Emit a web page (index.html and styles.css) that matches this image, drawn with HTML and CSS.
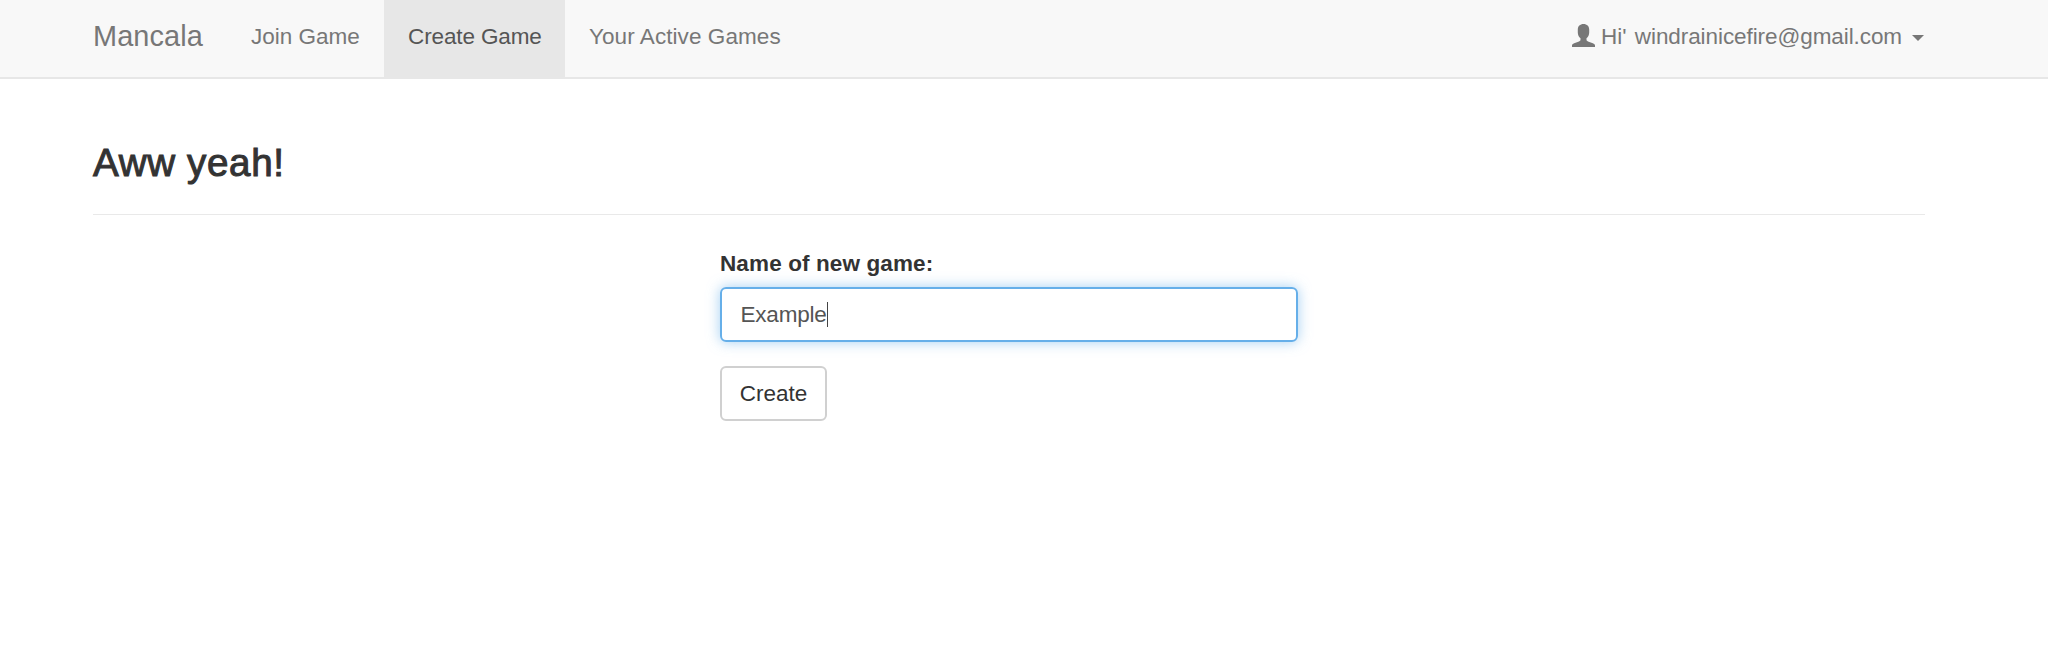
FILE: index.html
```html
<!DOCTYPE html>
<html lang="en">
<head>
<meta charset="utf-8">
<title>Mancala</title>
<link rel="stylesheet" href="styles.css">
</head>
<body>
<nav class="navbar">
  <a class="brand">Mancala</a>
  <a class="nav-link nav-join">Join Game</a>
  <a class="nav-link nav-create active">Create Game</a>
  <a class="nav-link nav-games">Your Active Games</a>
  <a class="user-menu">
    <svg class="user-icon" viewBox="0 0 23 23"><path d="M11.5 0C15 0 17.2 2.2 17.2 5.6V8.5C17.2 11 16 13.2 14.5 14.3V15.6C14.5 16.6 15 17 16 17.4L20.8 19.3C22.2 19.9 23 20.5 23 21.5V23H0V21.5C0 20.5.8 19.9 2.2 19.3L7 17.4C8 17 8.5 16.6 8.5 15.6V14.3C7 13.2 5.8 11 5.8 8.5V5.6C5.8 2.2 8 0 11.5 0Z"/></svg>
    <span class="user-name">Hi' windrainicefire@gmail.com</span>
    <span class="caret"></span>
  </a>
</nav>
<main class="container">
  <h3 class="page-title">Aww yeah!</h3>
  <form class="game-form">
    <label class="field-label">Name of new game:</label>
    <div class="field"><span>Example</span><i class="text-cursor"></i></div>
    <button class="button" type="button">Create</button>
  </form>
</main>
</body>
</html>
```
FILE: styles.css
```css
* { box-sizing: border-box; }
body {
  margin: 0;
  background: #fff;
  color: #333;
  font: 22.5px/32px "Liberation Sans", Arial, sans-serif;
}
.navbar {
  display: flex;
  height: 79px;
  padding: 0 124px 0 93px;
  background: #f8f8f8;
  border-bottom: 2px solid #e7e7e7;
  color: #777;
  white-space: nowrap;
}
.brand { width: 134px; padding-top: 20px; font-size: 28.9px; letter-spacing: 0.1px; }
.nav-link { padding: 21px 24px 0; }
.nav-join { width: 157px; }
.nav-create { width: 181px; letter-spacing: -0.12px; }
.nav-games { letter-spacing: 0.07px; }
.active { background: #e7e7e7; color: #555; }
.user-menu { display: flex; align-items: flex-start; margin-left: auto; padding-top: 21px; }
.user-icon { width: 23px; height: 23px; margin: 3px 6px 0 0; fill: #777; }
.user-name { letter-spacing: -0.08px; word-spacing: 2.3px; }
.caret {
  margin: 14px 0 0 10px;
  border: 6.5px solid transparent;
  border-top-color: #777;
  border-bottom: 0;
}
.container { width: 1832px; margin-left: 93px; padding-top: 61px; }
.page-title {
  height: 75px;
  margin: 0;
  border-bottom: 1px solid #e9e9e9;
  font-size: 38.6px;
  font-weight: 400;
  line-height: 46px;
  letter-spacing: 0.65px;
  -webkit-text-stroke: 1px #333;
}
.game-form {
  display: flex;
  flex-direction: column;
  align-items: flex-start;
  width: 578px;
  margin: 33px 0 0 627px;
}
.field-label { height: 39px; font-weight: 700; letter-spacing: 0.12px; }
.field {
  display: flex;
  align-items: center;
  width: 578px;
  height: 55px;
  padding: 0 18.5px;
  border: 2px solid #66afe9;
  border-radius: 6px;
  color: #555;
  letter-spacing: -0.2px;
  box-shadow: 0 0 13px rgba(102, 175, 233, 0.6);
}
.text-cursor { width: 1px; height: 25px; background: #444; }
.button {
  width: 107px;
  height: 55px;
  margin-top: 24px;
  padding: 0;
  border: 2px solid #d0d0d0;
  border-radius: 6px;
  background: #fff;
  color: #333;
  font: inherit;
}
```
